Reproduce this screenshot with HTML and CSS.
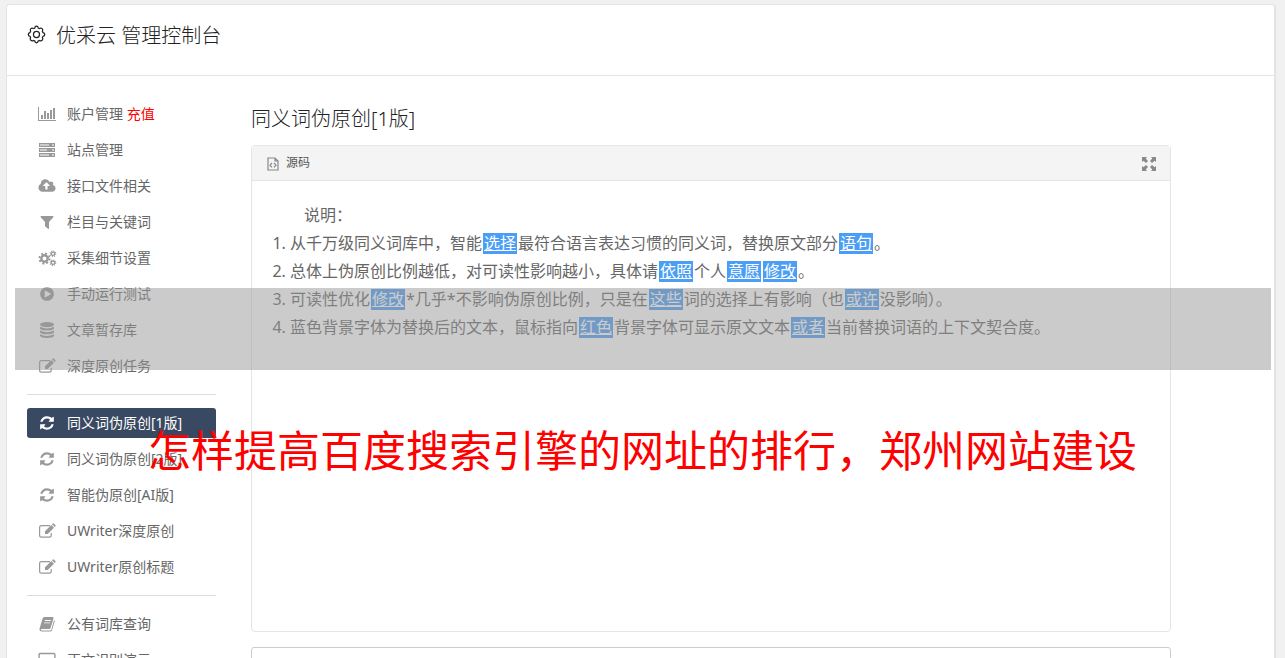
FILE: index.html
```html
<!DOCTYPE html>
<html lang="zh-CN">
<head>
<meta charset="utf-8">
<title>优采云 管理控制台</title>
<link rel="stylesheet" href="styles.css">
</head>
<body>
<svg class="sprite" aria-hidden="true">
  <symbol id="i-refresh" viewBox="0 0 1792 1792"><path d="M1639 1056q0 5-1 7-64 268-268 434.5t-478 166.500q-146 0-282.500-55t-243.500-157l-129 129q-19 19-45 19t-45-19-19-45v-448q0-26 19-45t45-19h448q26 0 45 19t19 45-19 45l-137 137q71 66 161 102t187 36q134 0 250-65t186-179q11-17 53-117 8-23 30-23h192q13 0 22.500 9.500t9.500 22.500zm25-800v448q0 26-19 45t-45 19h-448q-26 0-45-19t-19-45 19-45l138-138q-148-137-349-137-134 0-250 65t-186 179q-11 17-53 117-8 23-30 23h-199q-13 0-22.500-9.500t-9.500-22.500v-7q65-268 270-434.500t480-166.500q146 0 284 55.500t245 156.500l130-129q19-19 45-19t45 19 19 45z"/></symbol>
  <symbol id="i-chart" viewBox="0 0 20 16"><path d="M1 1h1v13h17v1H1zM4 9h2v4H4zM7 5h2v8H7zM10 7h2v6h-2zM13 4h2v9h-2zM16 2h2v11h-2z"/></symbol>
  <symbol id="i-server" viewBox="0 0 20 16"><path fill-rule="evenodd" d="M2 1h16v4H2zM3 2.500v1h9v-1zM15 2.500v1h2v-1zM2 6h16v4H2zM3 7.500v1h7v-1zM15 7.500v1h2v-1zM2 11h16v4H2zM3 12.500v1h9v-1zM15 12.500v1h2v-1z"/></symbol>
  <symbol id="i-cloud" viewBox="-64 0 1920 1792"><path d="M1216 864q0-14-9-23l-352-352q-9-9-23-9t-23 9l-351 351q-10 12-10 24 0 14 9 23t23 9h224v352q0 13 9.500 22.500t22.500 9.500h192q13 0 22.500-9.500t9.500-22.500v-352h224q13 0 22.500-9.500t9.500-22.500zm640 288q0 159-112.500 271.500t-271.500 112.500h-1088q-185 0-316.500-131.500t-131.500-316.500q0-130 70-240t188-165q-2-30-2-43 0-212 150-362t362-150q156 0 285.500 87t188.500 231q71-62 166-62 106 0 181 75t75 181q0 76-41 138 130 31 213.500 135.500t83.500 238.500z"/></symbol>
  <symbol id="i-filter" viewBox="0 0 20 16"><path d="M4 2h12q1 .5.3 1.300L12 8v6.500q-.3.8-1 .3L8.300 12.500Q8 12.200 8 12V8L3.700 3.300Q3.200 2.400 4 2z"/></symbol>
  <symbol id="i-cogs" viewBox="0 0 20 16"><g fill="none" stroke="currentColor"><circle cx="7.500" cy="8.500" r="3.200" stroke-width="2.400"/><circle cx="7.500" cy="8.500" r="5.100" stroke-width="1.800" stroke-dasharray="2 2.006"/><circle cx="16" cy="3.800" r="1.700" stroke-width="1.300"/><circle cx="16" cy="3.800" r="2.700" stroke-width="1.200" stroke-dasharray="1.060 1.060"/><circle cx="16" cy="12.700" r="1.700" stroke-width="1.300"/><circle cx="16" cy="12.700" r="2.700" stroke-width="1.200" stroke-dasharray="1.060 1.060"/></g></symbol>
  <symbol id="i-play" viewBox="0 0 1792 1792"><path d="M896 128q209 0 385.500 103t279.500 279.500 103 385.500-103 385.500-279.500 279.500-385.500 103-385.500-103-279.500-279.500-103-385.500 103-385.500 279.500-279.500 385.500-103zm384 823q32-18 32-55t-32-55l-544-320q-31-19-64-1-32 19-32 56v640q0 37 32 56 16 8 32 8 17 0 32-9z"/></symbol>
  <symbol id="i-database" viewBox="0 0 20 16"><ellipse cx="10" cy="2.600" rx="7" ry="2.600"/><path d="M3 4.700q7 3.600 14 0v1.800q-1 2-7 2t-7-2zM3 8.500q7 3.600 14 0v1.700q-1 2-7 2t-7-2zM3 12.200q7 3.600 14 0v1.500q-1 2.200-7 2.200t-7-2.200z"/></symbol>
  <symbol id="i-edit" viewBox="0 0 20 16"><path d="M13 2.600H4.500Q2.600 2.600 2.600 4.500v7.800q0 1.900 1.900 1.900h7.800q1.900 0 1.900-1.900V10" fill="none" stroke="currentColor" stroke-width="1.200"/><path d="M8 8.300l6.300-6.300 2.700 2.700L10.700 11H8zM15 1.300l.8-.8q.5-.4 1 0l1.700 1.700q.4.5 0 1l-.8.8z"/></symbol>
  <symbol id="i-book" viewBox="0 0 20 16"><path fill-rule="evenodd" d="M7.500 1h8.300q1 .2.700 1.300L13.600 12q-.3 1-1.300 1H4.500q-.8.200-.5.900.2.500.9.500h8.600q.7 0 .9-.8L17 4.300q.9.400.7 1.200L15 14.200q-.4 1.300-1.700 1.300H4.500Q2.500 15 2.400 13L5.500 2.800Q6 1.200 7.500 1zM8 4l-.3.900h6L14 4zM7.300 6.400l-.3.900h6l.3-.9z"/></symbol>
  <symbol id="i-screen" viewBox="0 0 20 16"><path d="M3 1.500h14q.9 0 .9.900v8.800q0 .9-.9.900H3q-.9 0-.9-.9V2.400q0-.9.900-.9zM7 15h6" fill="none" stroke="currentColor" stroke-width="1.400"/></symbol>
  <symbol id="i-gear" viewBox="0 0 20 20"><g fill="none" stroke="currentColor" stroke-width="1.300"><path d="M8.200 3.200Q8.300 1.300 10 1.300t1.800 1.900l1.400.6q1.500-1.200 2.700 0t.3 2.600l.6 1.600q1.900.2 1.900 2t-1.900 1.900l-.6 1.500q1.100 1.500-.2 2.700t-2.700.2l-1.500.6Q11.600 18.700 10 18.700t-1.800-1.800l-1.500-.6q-1.400 1-2.700-.2t-.2-2.700l-.6-1.500Q1.300 11.800 1.300 10t1.900-2l.6-1.600Q2.900 5 4.100 3.800t2.700 0z"/><circle cx="10" cy="10" r="3.200"/></g></symbol>
  <symbol id="i-code" viewBox="0 0 12 14"><path d="M1 1h7l3 3v9H1zM8 1v3h3M5 6L3 8.200l2 2.200M7 6l2 2.200-2 2.200" fill="none" stroke="currentColor" stroke-width="1.200"/></symbol>
  <symbol id="i-expand" viewBox="0 0 14 14"><path d="M0 0h5L3.700 1.500 6 4 4 6 1.500 3.700 0 5zM14 0v5l-1.500-1.300L10 6 8 4l2.300-2.500L9 0zM0 14V9l1.500 1.300L4 8l2 2-2.300 2.500L5 14zM14 14H9l1.300-1.500L8 10l2-2 2.500 2.300L14 9z"/></symbol>
</svg>

<div class="card">
  <header class="card-header">
    <svg class="gear"><use href="#i-gear"/></svg>
    <h1>优采云 管理控制台</h1>
  </header>
  <div class="layout">
    <nav class="sidebar">
      <ul>
        <li><a href="#"><svg><use href="#i-chart"/></svg><span>账户管理 <em>充值</em></span></a></li>
        <li><a href="#"><svg><use href="#i-server"/></svg><span>站点管理</span></a></li>
        <li><a href="#"><svg><use href="#i-cloud"/></svg><span>接口文件相关</span></a></li>
        <li><a href="#"><svg><use href="#i-filter"/></svg><span>栏目与关键词</span></a></li>
        <li><a href="#"><svg><use href="#i-cogs"/></svg><span>采集细节设置</span></a></li>
        <li><a href="#"><svg><use href="#i-play"/></svg><span>手动运行测试</span></a></li>
        <li><a href="#"><svg><use href="#i-database"/></svg><span>文章暂存库</span></a></li>
        <li><a href="#"><svg><use href="#i-edit"/></svg><span>深度原创任务</span></a></li>
      </ul>
      <ul>
        <li><a class="active" href="#"><svg><use href="#i-refresh"/></svg><span>同义词伪原创[1版]</span></a></li>
        <li><a href="#"><svg><use href="#i-refresh"/></svg><span>同义词伪原创[2版]</span></a></li>
        <li><a href="#"><svg><use href="#i-refresh"/></svg><span>智能伪原创[AI版]</span></a></li>
        <li><a href="#"><svg><use href="#i-edit"/></svg><span>UWriter深度原创</span></a></li>
        <li><a href="#"><svg><use href="#i-edit"/></svg><span>UWriter原创标题</span></a></li>
      </ul>
      <ul>
        <li><a href="#"><svg><use href="#i-book"/></svg><span>公有词库查询</span></a></li>
        <li><a href="#"><svg><use href="#i-screen"/></svg><span>正文识别演示</span></a></li>
      </ul>
    </nav>
    <main class="content">
      <h2>同义词伪原创[1版]</h2>
      <section class="editor">
        <div class="toolbar">
          <button type="button"><svg class="code"><use href="#i-code"/></svg>源码</button>
          <button type="button" aria-label="全屏"><svg class="expand"><use href="#i-expand"/></svg></button>
        </div>
        <div class="document">
          <p>说明：</p>
          <ol>
            <li>从千万级同义词库中，智能<mark>选择</mark>最符合语言表达习惯的同义词，替换原文部分<mark>语句</mark>。</li>
            <li>总体上伪原创比例越低，对可读性影响越小，具体请<mark>依照</mark>个人<mark>意愿</mark><mark>修改</mark>。</li>
            <li>可读性优化<mark>修改</mark>*几乎*不影响伪原创比例，只是在<mark>这些</mark>词的选择上有影响（也<mark>或许</mark>没影响）。</li>
            <li>蓝色背景字体为替换后的文本，鼠标指向<mark>红色</mark>背景字体可显示原文文本<mark>或者</mark>当前替换词语的上下文契合度。</li>
          </ol>
        </div>
      </section>
      <textarea class="source" aria-label="原文"></textarea>
    </main>
  </div>
</div>
<div class="band"></div>
<div class="caption">怎样提高百度搜索引擎的网址的排行，郑州网站建设</div>
</body>
</html>
```
FILE: styles.css
```css
* { box-sizing: border-box; }

body {
  margin: 0;
  padding: 4px 9px 0 6px;
  height: 100vh;
  overflow: hidden;
  position: relative;
  background: #f1f1f1;
  color: #666;
  font: 400 14px/20px "Noto Sans", "Noto Sans CJK SC", sans-serif;
}

h1, h2, p, ul, ol { margin: 0; padding: 0; }
h1, h2 { font-weight: 300; }
ul { list-style: none; }
svg { fill: currentColor; flex: none; }
.sprite { position: absolute; width: 0; height: 0; }

.card {
  background: #fff;
  border: 1px solid #e4e4e4;
  border-right-width: 2px;
  border-radius: 4px;
}

.card-header {
  display: flex;
  align-items: flex-start;
  gap: 10px;
  padding: 18px 20px 26px;
  border-bottom: 1px solid #e4e4e4;
  color: #222;
}
.card-header h1 { font-size: 20px; line-height: 26px; }
.gear { width: 19px; height: 19px; margin-top: 2px; }

.layout {
  display: flex;
  gap: 35px;
  padding: 23px 103px 0 20px;
}

.sidebar { flex: none; width: 189px; }
.sidebar ul { display: grid; gap: 6px; }
.sidebar ul + ul {
  margin-top: 13px;
  padding-top: 13px;
  border-top: 1px solid #ddd;
}
.sidebar a {
  display: flex;
  align-items: center;
  gap: 10px;
  height: 30px;
  padding: 0 10px;
  border-radius: 3px;
  color: #666;
  text-decoration: none;
}
.sidebar svg { width: 20px; height: 16px; color: #999; }
.sidebar em { color: #f00; font-style: normal; }
.sidebar .active { background: #394962; color: #fff; }
.sidebar .active svg { color: #fff; }

.content { flex: 1; min-width: 0; }
.content h2 {
  padding: 7px 0 13px;
  font-size: 20px;
  line-height: 26px;
  color: #222;
}

.editor {
  border: 1px solid #e5e5e5;
  border-radius: 4px;
}
.toolbar {
  display: flex;
  justify-content: space-between;
  height: 35px;
  padding: 0 14px 0 15px;
  background: #f4f4f4;
  border-bottom: 1px solid #e5e5e5;
}
.toolbar button {
  display: flex;
  align-items: center;
  gap: 7px;
  padding: 0;
  border: 0;
  background: none;
  color: #555;
  font: inherit;
  font-size: 12px;
}
.toolbar svg { color: #888; margin-top: 2px; }
.code { width: 12px; height: 14px; }
.expand { width: 14px; height: 14px; }

.document {
  min-height: 450px;
  padding: 20px;
  font-size: 16px;
  line-height: 28px;
}
.document p { text-indent: 32px; }
.document ol { padding-left: 18px; }
.document mark {
  display: inline-block;
  margin: 0 1px;
  padding: 0 1px;
  background: #4a9ef5;
  color: #fff;
  line-height: 21px;
  text-decoration: underline;
}

.source {
  display: block;
  width: 100%;
  height: 120px;
  margin-top: 15px;
  border: 1px solid #ccc;
  border-radius: 3px;
  resize: none;
}

.band {
  position: absolute;
  top: 288px;
  left: 15px;
  right: 14px;
  height: 82px;
  background: rgba(151, 151, 151, .5);
}
.caption {
  position: absolute;
  top: 419px;
  left: 0;
  right: 0;
  color: #f00;
  font-size: 43px;
  line-height: 64px;
  text-align: center;
  white-space: nowrap;
}
```
